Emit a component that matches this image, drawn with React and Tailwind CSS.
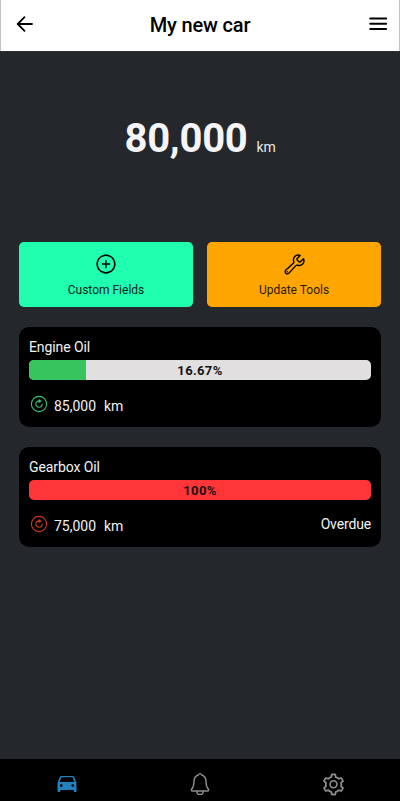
import { AiOutlinePlusCircle, AiOutlineSetting } from "react-icons/ai";
import { IoBuildOutline } from "react-icons/io5";

function RenewIcon({ className }) {
  return (
    <svg viewBox="0 0 18 18" className={className} fill="none" stroke="currentColor">
      <circle cx="9" cy="9" r="7.6" strokeWidth="1.1" />
      <path d="M9 5.9A3.2 3.2 0 1 0 12.2 9" strokeWidth="1.1" />
      <path d="M8.8 4.2v3.8l2.8-1.9z" fill="currentColor" strokeWidth="0.3" />
    </svg>
  );
}

function CarIcon({ className }) {
  return (
    <svg viewBox="0 0 20 18" className={className} fill="currentColor" fillRule="evenodd">
      <path d="M4.500 1h11c.8 0 1.400.4 1.700 1.100L19.500 8v8.200c0 .4-.4.8-.8.800h-1.200c-.4 0-.8-.4-.8-.8V15H3.300v1.200c0 .4-.4.8-.8.800H1.300c-.4 0-.8-.4-.8-.8V8l2.300-5.900C3.100 1.400 3.700 1 4.500 1zM4.400 2.300 2.600 7h14.800l-1.800-4.700zM4.200 9.200a1.400 1.400 0 1 0 0 2.800 1.400 1.400 0 0 0 0-2.800zM15.800 9.200a1.400 1.400 0 1 0 0 2.800 1.400 1.400 0 0 0 0-2.800z" />
    </svg>
  );
}

function BellIcon({ className }) {
  return (
    <svg viewBox="0 0 22 24" className={className} fill="none" stroke="currentColor" strokeWidth="1.4" strokeLinecap="round" strokeLinejoin="round">
      <path d="M11 1.600c-1 0-1.500.7-1.700 1.400C6.400 3.800 5 6.200 5 9.500c0 4.400-1 6.200-2.400 7.800-.6.8-.2 1.700.8 1.700h15.200c1 0 1.400-.9.8-1.700C18 15.700 17 13.900 17 9.500c0-3.300-1.400-5.700-4.300-6.500C12.500 2.300 12 1.600 11 1.600z" />
      <path d="M7.800 19.200a3.200 3.200 0 0 0 6.400 0" />
    </svg>
  );
}

function Card({ name, fill, fillClass, trackClass, percent, iconClass, km, status }) {
  return (
    <section className="h-[100px] rounded-[10px] bg-black px-[10px] pt-[10px]">
      <h2 className="h-[23px] text-[14px] leading-5 tracking-[-0.1px] text-[#f2f2f2]">{name}</h2>
      <div className={"grid h-5 overflow-hidden rounded-[5px] " + trackClass}>
        <div className={"col-start-1 row-start-1 " + fillClass} style={{ width: fill }} />
        <div className="col-start-1 row-start-1 text-center text-[13px] leading-[22px] font-bold tracking-[0.35px] text-[#151515]">
          {percent}
        </div>
      </div>
      <div className="mt-[15px] flex h-[22px] items-start">
        <RenewIcon className={"ml-px h-[18px] w-[18px] " + iconClass} />
        <span className="ml-[6px] pt-px text-[14px] leading-5 text-[#f2f2f2]">{km}</span>
        <span className="ml-[8px] pt-px text-[14px] leading-5 tracking-[-0.2px] text-[#f2f2f2]">km</span>
        <span className="ml-auto text-[14px] leading-[18px] tracking-[-0.15px] text-[#f2f2f2]">{status}</span>
      </div>
    </section>
  );
}

export default function App() {
  return (
    <div className="flex h-[801px] w-full flex-col bg-[#24282d] font-['Roboto',sans-serif]">
      <header className="flex h-[51px] items-center justify-between border-x border-[#c4c4c4] bg-white pr-[10px] pl-[15px] pb-[3px] text-black">
        <svg viewBox="0 0 18 18" className="h-[18px] w-[18px]" fill="none" stroke="currentColor" strokeWidth="1.8" strokeLinecap="round" strokeLinejoin="round">
          <path d="M8.500 2.200 1.700 9 8.500 15.800M2 9h14" />
        </svg>
        <h1 className="pt-[2px] pr-[3px] text-[20px] leading-6 font-medium tracking-[-0.15px]">My new car</h1>
        <svg viewBox="0 0 20 16" className="h-4 w-5 text-black" stroke="currentColor" strokeWidth="1.900" strokeLinecap="round">
          <path d="M1.200 2.500h16M1.200 7.800h16M1.200 13h16" />
        </svg>
      </header>
      <main className="flex-1 border-t border-[#303030] px-[19px]">
        <div className="flex h-[190px] items-baseline justify-center pt-[61px]">
          <span className="text-[40px] leading-[52px] font-bold tracking-[-0.25px] text-[#f5f5f7]">80,000</span>
          <span className="ml-[9px] text-[14px] tracking-[-0.2px] text-[#e8e8e8]">km</span>
        </div>
        <div className="grid grid-cols-2 gap-[14px]">
          <button className="flex h-[65px] flex-col items-center rounded-[5px] bg-[#1fffaf] pt-[11px] text-[#08251b]">
            <AiOutlinePlusCircle className="h-[22px] w-[22px] text-black" />
            <span className="mt-[7px] text-[12px] leading-4">Custom Fields</span>
          </button>
          <button className="flex h-[65px] flex-col items-center rounded-[5px] bg-[#ffa500] pt-[11px] text-[#2c1a10]">
            <IoBuildOutline className="h-[23px] w-[23px] text-black" />
            <span className="mt-[6px] text-[12px] leading-4">Update Tools</span>
          </button>
        </div>
        <div className="mt-5 flex flex-col gap-5">
          <Card name="Engine Oil" fill="16.67%" fillClass="bg-[#36c45d]" trackClass="bg-[#e1dfdf]" percent="16.67%" iconClass="text-[#36c471]" km="85,000" />
          <Card name="Gearbox Oil" fill="100%" fillClass="bg-[#ff3538]" trackClass="bg-[#ff3538]" percent="100%" iconClass="text-[#d3352b]" km="75,000" status="Overdue" />
        </div>
      </main>
      <nav className="grid h-[42px] grid-cols-3 items-center justify-items-center bg-black pt-[8px] text-[#8e8e8e]">
        <CarIcon className="h-[18px] w-5 text-[#2382bb]" />
        <BellIcon className="h-6 w-[22px]" />
        <AiOutlineSetting className="ml-px h-[25px] w-[25px]" />
      </nav>
    </div>
  );
}
